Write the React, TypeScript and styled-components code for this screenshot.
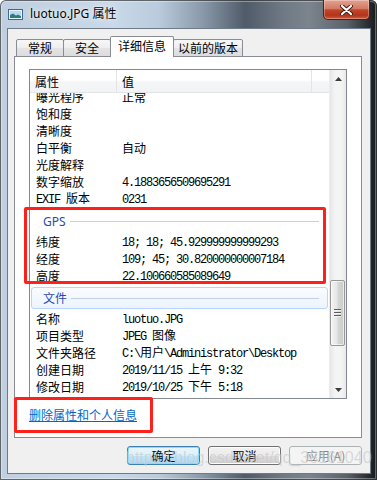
import React from 'react';
import styled, { createGlobalStyle } from 'styled-components';

const CJK = `"Noto Sans CJK SC", "Noto Sans", sans-serif`;
const UI = `"Noto Sans", "Noto Sans CJK SC", sans-serif`;

const GlobalStyle = createGlobalStyle`
  html, body {
    margin: 0;
    padding: 0;
    background: #ffffff;
  }
  body {
    font-family: ${CJK};
    font-size: 12px;
    color: #000;
  }
`;

type Entry =
  | { label: string; value?: string }
  | { group: string; hover?: boolean };

const entries: Entry[] = [
  { label: '曝光程序', value: '正常' },
  { label: '饱和度' },
  { label: '清晰度' },
  { label: '白平衡', value: '自动' },
  { label: '光度解释' },
  { label: '数字缩放', value: '4.1883656509695291' },
  { label: 'EXIF 版本', value: '0231' },
  { group: 'GPS' },
  { label: '纬度', value: '18; 18; 45.929999999999293' },
  { label: '经度', value: '109; 45; 30.820000000007184' },
  { label: '高度', value: '22.100660585089649' },
  { group: '文件', hover: true },
  { label: '名称', value: 'luotuo.JPG' },
  { label: '项目类型', value: 'JPEG 图像' },
  { label: '文件夹路径', value: 'C:\\用户\\Administrator\\Desktop' },
  { label: '创建日期', value: '2019/11/15 上午 9:32' },
  { label: '修改日期', value: '2019/10/25 下午 5:18' },
];

const tabs = [
  { name: '常规', width: 48 },
  { name: '安全', width: 48 },
  { name: '详细信息', width: 64, active: true },
  { name: '以前的版本', width: 70 },
];

const Window = styled.div`
  position: relative;
  width: 377px;
  height: 480px;
  display: flex;
  flex-direction: column;
  overflow: hidden;
  border-radius: 6px 6px 0 0;
  background: linear-gradient(
    90deg,
    #bfcfdf 0%,
    #c9d9e9 30%,
    #b9cbdc 42%,
    #8898a9 54%,
    #4f5b68 65%,
    #6f7984 75%,
    #7c858e 82%,
    #5a6169 92%,
    #262a2e 98%,
    #15181a 100%
  );
  box-shadow: inset 0 0 0 1px rgba(0, 0, 0, 0.55), inset 0 0 0 2px rgba(255, 255, 255, 0.35);
`;

const TitleBar = styled.div`
  height: 28px;
  flex-shrink: 0;
  display: flex;
  align-items: flex-start;
`;

const TitleIcon = styled.svg`
  margin: 9px 0 0 8px;
  flex-shrink: 0;
`;

const TitleText = styled.div`
  margin: 6px 0 0 7px;
  font-family: ${UI};
  font-size: 12px;
  line-height: 16px;
  color: #000;
  text-shadow: 0 0 6px rgba(255, 255, 255, 0.95), 0 0 2px rgba(255, 255, 255, 0.8);
`;

const CloseButton = styled.div`
  margin-left: auto;
  margin-right: 7px;
  width: 47px;
  height: 20px;
  box-sizing: border-box;
  border: 1px solid #4d2118;
  border-top: none;
  border-radius: 0 0 5px 5px;
  background: linear-gradient(#e3a293 0%, #d27a64 45%, #c2452b 52%, #b3331b 80%, #cf5b3e 100%);
  box-shadow: inset 0 0 0 1px rgba(255, 255, 255, 0.3);
  display: flex;
  align-items: center;
  justify-content: center;
`;

const Client = styled.div`
  margin: 0 6px 0 7px;
  height: 446px;
  box-sizing: border-box;
  border: 1px solid #6e7a87;
  background: #f0f0f0;
  display: flex;
  flex-direction: column;
`;

const TabRow = styled.div`
  display: flex;
  align-items: flex-end;
  padding: 7px 0 0 8px;
  margin-bottom: -1px;
  position: relative;
  z-index: 1;
`;

const Tab = styled.div<{ $width: number; $active?: boolean }>`
  width: ${({ $width }) => $width}px;
  height: ${({ $active }) => ($active ? 21 : 18)}px;
  box-sizing: border-box;
  margin-left: -1px;
  border: 1px solid #898c95;
  border-bottom: ${({ $active }) => ($active ? 'none' : '1px solid #898c95')};
  border-radius: 2px 2px 0 0;
  background: ${({ $active }) =>
    $active ? '#ffffff' : 'linear-gradient(#f7f7f7, #eeeeee 50%, #e4e4e4 51%, #dcdcdc)'};
  position: relative;
  z-index: ${({ $active }) => ($active ? 2 : 1)};
  display: flex;
  align-items: center;
  justify-content: center;
  padding-bottom: ${({ $active }) => ($active ? 2 : 0)}px;
  font-size: 12px;
  line-height: 14px;

  &:first-child {
    margin-left: 0;
  }
`;

const Panel = styled.div`
  margin: 0 8px 0 6px;
  height: 382px;
  box-sizing: border-box;
  border: 1px solid #898c95;
  background: #ffffff;
  padding: 12px 14px 0;
  display: flex;
  flex-direction: column;
`;

const ListView = styled.div`
  width: 318px;
  height: 330px;
  box-sizing: border-box;
  border: 1px solid #828790;
  display: flex;
  flex-shrink: 0;
`;

const ListMain = styled.div`
  width: 299px;
  display: flex;
  flex-direction: column;
`;

const Header = styled.div`
  height: 23px;
  box-sizing: border-box;
  border-bottom: 1px solid #e3e4e6;
  background: linear-gradient(#ffffff 0%, #ffffff 45%, #f4f5f7 55%, #f2f3f5 100%);
  display: flex;
  flex-shrink: 0;
`;

const HeaderCell = styled.div<{ $width?: number }>`
  ${({ $width }) => ($width ? `width: ${$width}px;` : 'flex: 1;')}
  box-sizing: border-box;
  border-right: 1px solid #e3e4e6;
  padding-left: 5px;
  display: flex;
  align-items: center;
  font-size: 12px;
  &:last-child {
    border-right: none;
  }
`;

const Viewport = styled.div`
  flex: 1;
  overflow: hidden;
`;

const Rows = styled.div<{ $scroll: number }>`
  margin-top: ${({ $scroll }) => -$scroll}px;
`;

const Row = styled.div`
  height: 17px;
  display: flex;
  align-items: center;
  line-height: 17px;
  white-space: nowrap;
`;

const Label = styled.div`
  width: 87px;
  flex-shrink: 0;
  padding-left: 6px;
  box-sizing: border-box;
  overflow: hidden;
`;

const Value = styled.div`
  padding-left: 5px;
`;

const Group = styled.div`
  height: 26px;
  box-sizing: border-box;
  padding: 3px 1px 1px;
`;

const GroupBox = styled.div<{ $hover?: boolean }>`
  height: 22px;
  box-sizing: border-box;
  border: 1px solid ${({ $hover }) => ($hover ? '#b8d6fb' : 'transparent')};
  border-radius: 3px;
  background: ${({ $hover }) =>
    $hover ? 'linear-gradient(#fafcff, #ecf4fe)' : 'transparent'};
  display: flex;
  align-items: center;
  padding-left: 11px;
`;

const GroupTitle = styled.span`
  font-family: ${UI};
  font-size: 12px;
  color: #2b48b8;
`;

const GroupLine = styled.div`
  flex: 1;
  height: 1px;
  margin: 1px 8px 0 4px;
  background: #c4d1e6;
`;

const Ascii = styled.span`
  font-family: "Liberation Mono", monospace;
  letter-spacing: -1.2px;
`;

const ScrollBar = styled.div`
  width: 17px;
  display: flex;
  flex-direction: column;
  background: linear-gradient(90deg, #e6e6e6, #f4f4f4 30%, #f4f4f4 70%, #e9e9e9);
  border-left: 1px solid #ececec;
  box-sizing: border-box;
`;

const ArrowButton = styled.div`
  height: 17px;
  flex-shrink: 0;
  display: flex;
  align-items: center;
  justify-content: center;
`;

const Track = styled.div`
  flex: 1;
`;

const Thumb = styled.div<{ $top: number; $size: number }>`
  margin-top: ${({ $top }) => $top}px;
  height: ${({ $size }) => $size}px;
  width: 15px;
  box-sizing: border-box;
  border: 1px solid #979797;
  border-radius: 2px;
  background: linear-gradient(90deg, #f4f4f4, #e6e6e6 45%, #d6d6d6 55%, #cbcbcb);
  box-shadow: inset 0 0 0 1px rgba(255, 255, 255, 0.6);
  display: flex;
  flex-direction: column;
  align-items: center;
  justify-content: center;
  gap: 1px;
`;

const Grip = styled.div`
  width: 7px;
  height: 1px;
  background: #5a5a5a;
  border-bottom: 1px solid #f4f4f4;
`;

const LinkRow = styled.div`
  padding-top: 8px;
  line-height: 16px;
`;

const Link = styled.a`
  color: #0066cc;
  text-decoration: underline;
  font-size: 12px;
  cursor: pointer;
`;

const ButtonRow = styled.div`
  display: flex;
  justify-content: flex-end;
  gap: 8px;
  padding: 8px 8px 0 0;
`;

const Button = styled.div<{ $variant?: 'default' | 'disabled' }>`
  width: 73px;
  height: 19px;
  box-sizing: border-box;
  border-radius: 3px;
  display: flex;
  align-items: center;
  justify-content: center;
  font-size: 12px;
  border: 1px solid
    ${({ $variant }) =>
      $variant === 'default' ? '#3c7fb1' : $variant === 'disabled' ? '#adb2b5' : '#707070'};
  color: ${({ $variant }) => ($variant === 'disabled' ? '#838383' : '#000')};
  background: ${({ $variant }) =>
    $variant === 'default'
      ? 'linear-gradient(#eaf6fd, #d9f0fc 50%, #bee6fd 51%, #a7d9f5)'
      : $variant === 'disabled'
      ? '#f4f4f4'
      : 'linear-gradient(#f2f2f2, #ebebeb 50%, #dddddd 51%, #cfcfcf)'};
  box-shadow: ${({ $variant }) =>
    $variant === 'default'
      ? 'inset 0 0 0 1px #7fe0fb'
      : $variant === 'disabled'
      ? 'none'
      : 'inset 0 0 0 1px #fcfcfc'};
`;

const Watermark = styled.div`
  position: absolute;
  left: 126px;
  top: 449px;
  font-family: "Liberation Sans", sans-serif;
  font-size: 16px;
  color: rgba(150, 150, 150, 0.35);
  text-shadow: 0 0 1px rgba(255, 255, 255, 0.5);
  white-space: nowrap;
  pointer-events: none;
`;

const Mark = styled.div<{ $x: number; $y: number; $w: number; $h: number }>`
  position: absolute;
  left: ${({ $x }) => $x}px;
  top: ${({ $y }) => $y}px;
  width: ${({ $w }) => $w}px;
  height: ${({ $h }) => $h}px;
  box-sizing: border-box;
  border: 3px solid #fd2119;
  border-radius: 2px;
  pointer-events: none;
`;

const Mixed: React.FC<{ text: string }> = ({ text }) => (
  <>
    {text
      .split(/([\x20-\x7e]+)/)
      .filter(Boolean)
      .map((part, i) =>
        /^[\x20-\x7e]+$/.test(part) ? <Ascii key={i}>{part}</Ascii> : <span key={i}>{part}</span>
      )}
  </>
);

const Triangle: React.FC<{ up?: boolean }> = ({ up }) => (
  <svg width="7" height="4" viewBox="0 0 7 4">
    <path d={up ? 'M0 4 L3.5 0 L7 4 Z' : 'M0 0 L3.5 4 L7 0 Z'} fill="#3c3c3c" />
  </svg>
);

export default function App() {
  return (
    <>
      <GlobalStyle />
      <Window>
        <TitleBar>
          <TitleIcon width="15" height="11" viewBox="0 0 15 11">
            <rect x="0.5" y="0.5" width="14" height="10" fill="#e9f1f8" stroke="#41698f" />
            <rect x="2" y="2" width="11" height="4" fill="#b9d9f0" />
            <path d="M2 9 L2 6 L5 4.5 L8 6.5 L10 5.5 L13 7 L13 9 Z" fill="#2f7d7a" />
          </TitleIcon>
          <TitleText>luotuo.JPG 属性</TitleText>
          <CloseButton>
            <svg width="13" height="10" viewBox="0 0 13 10">
              <path d="M2 1 L11 9 M11 1 L2 9" stroke="#3b1a12" strokeWidth="4" strokeLinecap="round" />
              <path d="M2 1 L11 9 M11 1 L2 9" stroke="#ffffff" strokeWidth="2.2" strokeLinecap="round" />
            </svg>
          </CloseButton>
        </TitleBar>

        <Client>
          <TabRow>
            {tabs.map((t) => (
              <Tab key={t.name} $width={t.width} $active={t.active}>
                {t.name}
              </Tab>
            ))}
          </TabRow>

          <Panel>
            <ListView>
              <ListMain>
                <Header>
                  <HeaderCell $width={87}>属性</HeaderCell>
                  <HeaderCell $width={195}>值</HeaderCell>
                  <HeaderCell />
                </Header>
                <Viewport>
                  <Rows $scroll={5}>
                    {entries.map((e, i) =>
                      'group' in e ? (
                        <Group key={i}>
                          <GroupBox $hover={e.hover}>
                            <GroupTitle>{e.group}</GroupTitle>
                            <GroupLine />
                          </GroupBox>
                        </Group>
                      ) : (
                        <Row key={i}>
                          <Label>
                            <Mixed text={e.label} />
                          </Label>
                          <Value>{e.value && <Mixed text={e.value} />}</Value>
                        </Row>
                      )
                    )}
                  </Rows>
                </Viewport>
              </ListMain>
              <ScrollBar>
                <ArrowButton>
                  <Triangle up />
                </ArrowButton>
                <Track>
                  <Thumb $top={193} $size={66}>
                    <Grip />
                    <Grip />
                    <Grip />
                  </Thumb>
                </Track>
                <ArrowButton>
                  <Triangle />
                </ArrowButton>
              </ScrollBar>
            </ListView>

            <LinkRow>
              <Link>删除属性和个人信息</Link>
            </LinkRow>
          </Panel>

          <ButtonRow>
            <Button $variant="default">确定</Button>
            <Button>取消</Button>
            <Button $variant="disabled">应用(A)</Button>
          </ButtonRow>
        </Client>

        <Mark $x={24} $y={207} $w={302} $h={77} />
        <Mark $x={14} $y={397} $w={139} $h={36} />
        <Watermark>https://blog.csdn.net/qq_38161040</Watermark>
      </Window>
    </>
  );
}
